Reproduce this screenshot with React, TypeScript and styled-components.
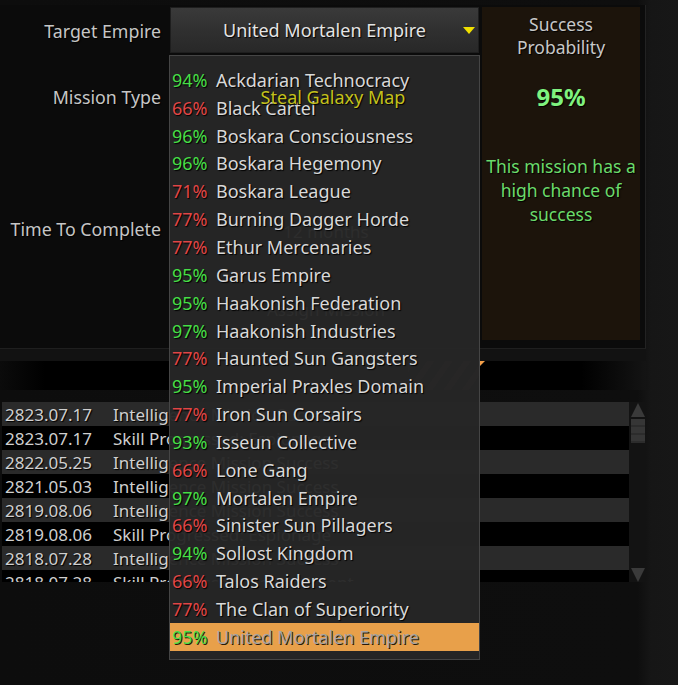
import React from "react"
import styled, {createGlobalStyle} from "styled-components";

const GlobalStyle = createGlobalStyle`
  html, body {
    margin: 0;
    padding: 0;
    background: #101010;
  }
  body {
    font-family: "Noto Sans", "DejaVu Sans", sans-serif;
  }
`

const FONT = `"Noto Sans", "DejaVu Sans", sans-serif`

const StyledPage = styled.div`
  position: relative;
  width: 678px;
  height: 685px;
  overflow: hidden;
  background: linear-gradient(90deg, #0d0d0d 0%, #0e0e0e 94%, #161616 96%, #171717 100%);
  font-family: ${FONT};
  color: #cfcfcf;
  text-shadow: 1px 1px 1px #000;
`

const StyledTopPanel = styled.div`
  margin-top: 5px;
  width: 646px;
  height: 344px;
  box-sizing: border-box;
  border-right: 1px solid #222;
  border-bottom: 1px solid #1f1f1f;
  background: #0b0b0b;
  display: grid;
  grid-template-columns: 170px 312px 158px;
  grid-template-rows: 48px 88px 176px;
  padding-top: 2px;
`

const StyledLabel = styled.div<{row: number}>`
  grid-column: 1;
  grid-row: ${p => p.row};
  display: flex;
  align-items: center;
  justify-content: flex-end;
  padding-right: 9px;
  padding-bottom: ${p => p.row === 1 ? 1 : 5}px;
  font-size: 17.8px;
  color: #c6c6c6;
`

const StyledMiddle = styled.div<{row: number}>`
  grid-column: 2;
  grid-row: ${p => p.row};
  display: flex;
  flex-direction: column;
  align-items: center;
`

const StyledSelectHeader = styled.div`
  width: 309px;
  height: 46px;
  margin-right: 3px;
  box-sizing: border-box;
  border: 1px solid #1e1e1e;
  background: linear-gradient(180deg, #3a3a3a 0%, #2f2f2f 55%, #282828 100%);
  display: flex;
  align-items: center;
  justify-content: center;
  position: relative;
  font-size: 18px;
  color: #e4e4e4;
`

const StyledCaret = styled.span`
  position: absolute;
  right: 3px;
  top: 19px;
  width: 0;
  height: 0;
  border-left: 6px solid transparent;
  border-right: 6px solid transparent;
  border-top: 7px solid #f0e000;
`

const StyledMissionValue = styled.div`
  position: relative;
  z-index: 5;
  margin-top: 30px;
  margin-left: 14px;
  font-size: 18px;
  color: #c4c21c;
  text-shadow: 1px 1px 1px #000;
`

const StyledFaintText = styled.div<{mt: number}>`
  margin-top: ${p => p.mt}px;
  font-size: 17px;
  color: #bdbdbd;
`

const StyledOdds = styled.div`
  grid-column: 3;
  grid-row: 1 / 4;
  height: 333px;
  background: #1c140b;
  display: flex;
  flex-direction: column;
  align-items: center;
  text-align: center;
  padding-top: 6px;
  box-sizing: border-box;
`

const StyledOddsTitle = styled.div`
  font-size: 17.5px;
  line-height: 23px;
  color: #c8c8c8;
`

const StyledOddsValue = styled.div`
  margin-top: 26px;
  font-size: 24px;
  line-height: 24px;
  font-weight: 700;
  color: #7ff27f;
`

const StyledOddsNote = styled.div`
  margin-top: 45px;
  font-size: 17.5px;
  line-height: 24px;
  color: #6bdc6b;
`

const StyledGap = styled.div`
  height: 12px;
  width: 646px;
  background: #121212;
`

const StyledBar = styled.div`
  position: relative;
  height: 29px;
  width: 646px;
  background: linear-gradient(90deg, #0b0b0b 0%, #000 7%, #000 90%, #141414 100%);
`

const StyledStripes = styled.div`
  position: absolute;
  left: 408px;
  top: 0;
  width: 72px;
  height: 29px;
  background: repeating-linear-gradient(-55deg, transparent 0 9px, #352a20 9px 15px);
`

const StyledCorner = styled.div`
  position: absolute;
  left: 479px;
  top: 0;
  width: 0;
  height: 0;
  border-top: 6px solid #f4a04a;
  border-right: 6px solid transparent;
`

const StyledLogArea = styled.div`
  margin-top: 12px;
  display: flex;
  width: 646px;
  height: 180px;
`

const StyledLog = styled.div`
  margin-left: 2px;
  width: 627px;
  height: 180px;
  overflow: hidden;
`

const StyledLogRow = styled.div<{odd: boolean}>`
  height: 24px;
  display: flex;
  align-items: center;
  background: ${p => p.odd ? "#2a2a2a" : "#000"};
  font-size: 17px;
  color: #cfcfcf;
  white-space: nowrap;
`

const StyledDate = styled.span`
  width: 108px;
  padding-left: 3px;
`

const StyledScroll = styled.div`
  width: 17px;
  display: flex;
  flex-direction: column;
  align-items: center;
  padding-top: 1px;
  background: #131313;
`

const StyledArrow = styled.div<{down?: boolean}>`
  width: 0;
  height: 0;
  border-left: 7px solid transparent;
  border-right: 7px solid transparent;
  ${p => p.down ? "border-top: 14px solid #3a3a3a;" : "border-bottom: 14px solid #3a3a3a;"}
`

const StyledThumb = styled.div`
  margin-top: 2px;
  width: 14px;
  height: 24px;
  background: repeating-linear-gradient(180deg, #363636 0 6px, #2c2c2c 6px 8px);
  flex: none;
`

const StyledScrollFill = styled.div`
  flex: 1;
`

const StyledDropdown = styled.div`
  position: absolute;
  left: 169px;
  top: 55px;
  width: 311px;
  box-sizing: border-box;
  border: 1px solid #454545;
  background: rgba(39, 39, 39, 0.96);
  padding: 10px 0 8px;
  z-index: 4;
`

const StyledOption = styled.div<{selected?: boolean}>`
  height: 27.85px;
  display: flex;
  align-items: center;
  padding-left: 2px;
  font-size: 18px;
  white-space: nowrap;
  background: ${p => p.selected ? "#e8a04a" : "transparent"};
  color: ${p => p.selected ? "#a4a4a4" : "#d9d9d9"};
  text-shadow: ${p => p.selected ? "1px 1px 0 #2a1a08" : "1px 1px 1px #000"};
`

const StyledChance = styled.span<{good: boolean}>`
  min-width: 44px;
  color: ${p => p.good ? "#46de46" : "#e04646"};
`

const empires: [number, string][] = [
    [94, "Ackdarian Technocracy"],
    [66, "Black Cartel"],
    [96, "Boskara Consciousness"],
    [96, "Boskara Hegemony"],
    [71, "Boskara League"],
    [77, "Burning Dagger Horde"],
    [77, "Ethur Mercenaries"],
    [95, "Garus Empire"],
    [95, "Haakonish Federation"],
    [97, "Haakonish Industries"],
    [77, "Haunted Sun Gangsters"],
    [95, "Imperial Praxles Domain"],
    [77, "Iron Sun Corsairs"],
    [93, "Isseun Collective"],
    [66, "Lone Gang"],
    [97, "Mortalen Empire"],
    [66, "Sinister Sun Pillagers"],
    [94, "Sollost Kingdom"],
    [66, "Talos Raiders"],
    [77, "The Clan of Superiority"],
    [95, "United Mortalen Empire"],
]

const log: [string, string][] = [
    ["2823.07.17", "Intelligence Mission Success"],
    ["2823.07.17", "Skill Progressed: Espionage"],
    ["2822.05.25", "Intelligence Mission Success"],
    ["2821.05.03", "Intelligence Mission Success"],
    ["2819.08.06", "Intelligence Mission Success"],
    ["2819.08.06", "Skill Progressed: Espionage"],
    ["2818.07.28", "Intelligence Mission Success"],
    ["2818.07.28", "Skill Progressed: Concealment"],
]

const selected = "United Mortalen Empire"

const App: React.FC = () => {
    return (
        <StyledPage>
            <GlobalStyle/>
            <StyledTopPanel>
                <StyledLabel row={1}>Target Empire</StyledLabel>
                <StyledLabel row={2}>Mission Type</StyledLabel>
                <StyledLabel row={3}>Time To Complete</StyledLabel>
                <StyledMiddle row={1}>
                    <StyledSelectHeader>
                        {selected}
                        <StyledCaret/>
                    </StyledSelectHeader>
                </StyledMiddle>
                <StyledMiddle row={2}>
                    <StyledMissionValue>Steal Galaxy Map</StyledMissionValue>
                </StyledMiddle>
                <StyledMiddle row={3}>
                    <StyledFaintText mt={77}>12 months</StyledFaintText>
                    <StyledFaintText mt={55}>Assign Mission</StyledFaintText>
                </StyledMiddle>
                <StyledOdds>
                    <StyledOddsTitle>Success<br/>Probability</StyledOddsTitle>
                    <StyledOddsValue>95%</StyledOddsValue>
                    <StyledOddsNote>This mission has a<br/>high chance of<br/>success</StyledOddsNote>
                </StyledOdds>
            </StyledTopPanel>
            <StyledGap/>
            <StyledBar>
                <StyledStripes/>
                <StyledCorner/>
            </StyledBar>
            <StyledLogArea>
                <StyledLog>
                    {
                        log.map(([date, text], i) => (
                            <StyledLogRow key={i} odd={i % 2 === 0}>
                                <StyledDate>{date}</StyledDate>
                                <span>{text}</span>
                            </StyledLogRow>
                        ))
                    }
                </StyledLog>
                <StyledScroll>
                    <StyledArrow/>
                    <StyledThumb/>
                    <StyledScrollFill/>
                    <StyledArrow down/>
                </StyledScroll>
            </StyledLogArea>
            <StyledDropdown>
                {
                    empires.map(([chance, name]) => (
                        <StyledOption key={name} selected={name === selected}>
                            <StyledChance good={chance >= 90}>{chance}%</StyledChance>
                            <span>{name}</span>
                        </StyledOption>
                    ))
                }
            </StyledDropdown>
        </StyledPage>
    )
}

export default App
